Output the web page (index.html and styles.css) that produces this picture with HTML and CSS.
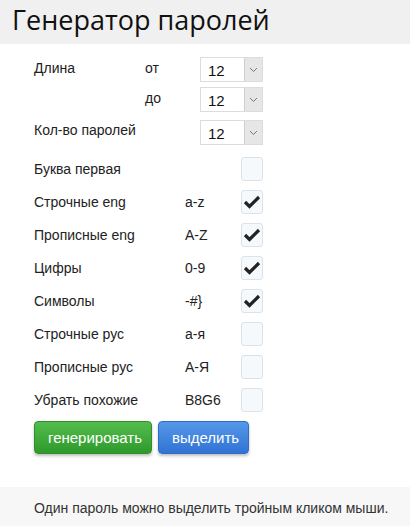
FILE: index.html
```html
<!DOCTYPE html>
<html lang="ru">

<head>
    <meta charset="UTF-8">
    <meta name="viewport" content="width=device-width, initial-scale=1.0">
    <title>Генератор паролей</title>
    <link rel="stylesheet" href="styles.css">
</head>

<body>
    <div class="header">
        <h1>Генератор паролей</h1>
    </div>

    <div class="form">
        <!-- Length -->
        <div class="row row-select">
            <div class="label short">Длина</div>
            <div class="sub">от</div>
            <div class="select"><span class="val">12</span><span class="arrow"><svg width="9" height="6" viewBox="0 0 9 6"><path d="M1 1l3.5 3.5L8 1" fill="none" stroke="#777" stroke-width="1"/></svg></span></div>
        </div>
        <div class="row row-select">
            <div class="label short"></div>
            <div class="sub">до</div>
            <div class="select"><span class="val">12</span><span class="arrow"><svg width="9" height="6" viewBox="0 0 9 6"><path d="M1 1l3.5 3.5L8 1" fill="none" stroke="#777" stroke-width="1"/></svg></span></div>
        </div>
        <div class="row row-select count">
            <div class="label long">Кол-во паролей</div>
            <div class="select"><span class="val">12</span><span class="arrow"><svg width="9" height="6" viewBox="0 0 9 6"><path d="M1 1l3.5 3.5L8 1" fill="none" stroke="#777" stroke-width="1"/></svg></span></div>
        </div>

        <!-- Options -->
        <div class="row row-check">
            <div class="label">Буква первая</div>
            <div class="hint"></div>
            <div class="check"></div>
        </div>
        <div class="row row-check">
            <div class="label">Строчные eng</div>
            <div class="hint">a-z</div>
            <div class="check on"><svg width="18" height="14" viewBox="0 0 18 14"><path d="M2 7l4.5 4.5L16 2" fill="none" stroke="#222" stroke-width="3.2"/></svg></div>
        </div>
        <div class="row row-check">
            <div class="label">Прописные eng</div>
            <div class="hint">A-Z</div>
            <div class="check on"><svg width="18" height="14" viewBox="0 0 18 14"><path d="M2 7l4.5 4.5L16 2" fill="none" stroke="#222" stroke-width="3.2"/></svg></div>
        </div>
        <div class="row row-check">
            <div class="label">Цифры</div>
            <div class="hint">0-9</div>
            <div class="check on"><svg width="18" height="14" viewBox="0 0 18 14"><path d="M2 7l4.5 4.5L16 2" fill="none" stroke="#222" stroke-width="3.2"/></svg></div>
        </div>
        <div class="row row-check">
            <div class="label">Символы</div>
            <div class="hint">-#}</div>
            <div class="check on"><svg width="18" height="14" viewBox="0 0 18 14"><path d="M2 7l4.5 4.5L16 2" fill="none" stroke="#222" stroke-width="3.2"/></svg></div>
        </div>
        <div class="row row-check">
            <div class="label">Строчные рус</div>
            <div class="hint">а-я</div>
            <div class="check"></div>
        </div>
        <div class="row row-check">
            <div class="label">Прописные рус</div>
            <div class="hint">А-Я</div>
            <div class="check"></div>
        </div>
        <div class="row row-check">
            <div class="label">Убрать похожие</div>
            <div class="hint">B8G6</div>
            <div class="check"></div>
        </div>

        <div class="buttons">
            <button class="btn btn-green">генерировать</button>
            <button class="btn btn-blue">выделить</button>
        </div>
    </div>

    <div class="footer">
        Один пароль можно выделить тройным кликом мыши.
    </div>
</body>

</html>
```

FILE: styles.css
```css
body {
    font-family: "Liberation Sans", Arial, sans-serif;
    font-size: 14px;
    color: #222;
    margin: 0;
    padding: 0;
    background-color: #ffffff;
}

.header {
    background-color: #f0f0f0;
    height: 44px;
    padding-left: 12px;
}

h1 {
    margin: 0;
    font-family: "Open Sans", "DejaVu Sans", sans-serif;
    font-weight: normal;
    font-size: 27px;
    line-height: 40px;
    color: #111;
}

.form {
    padding: 13px 0 0 34px;
    height: 443px;
    box-sizing: border-box;
}

.row {
    display: flex;
    align-items: center;
}

.row-select {
    height: 25px;
    margin-bottom: 5px;
}

.row-select.count {
    margin-top: 8px;
    margin-bottom: 12px;
}

.row-check {
    height: 24px;
    margin-bottom: 9px;
}

.label {
    width: 151px;
    flex-shrink: 0;
}

.label.short {
    width: 111px;
}

.label.long {
    width: 166px;
}

.sub {
    width: 55px;
}

.row-select .label,
.row-select .sub {
    align-self: flex-start;
    padding-top: 3px;
}

.row-select.count .label {
    padding-top: 2px;
}

.hint {
    width: 56px;
}

.select {
    display: flex;
    width: 63px;
    height: 25px;
    box-sizing: border-box;
    border: 1px solid #dcdcdc;
    background: #fff;
}

.select .val {
    flex: 1;
    padding-left: 7px;
    font-size: 15px;
    line-height: 25px;
    color: #111;
}

.select .arrow {
    width: 17px;
    background: #e6e6e6;
    border-left: 1px solid #cfcfcf;
    display: flex;
    align-items: center;
    justify-content: center;
}

.check {
    width: 22px;
    height: 24px;
    box-sizing: border-box;
    border: 1px solid #dbe2ea;
    border-radius: 3px;
    background: #f6f9fc;
    display: flex;
    align-items: center;
    justify-content: center;
}

.buttons {
    display: flex;
    gap: 6px;
    margin-top: 3px;
}

.btn {
    height: 33px;
    border: none;
    border-radius: 4px;
    color: #fff;
    font-family: "Liberation Sans", Arial, sans-serif;
    font-size: 15px;
    padding: 0 13px;
    box-shadow: 0 2px 3px rgba(0, 0, 0, 0.25);
}

.btn-green {
    width: 118px;
    background: linear-gradient(#52bd4c, #2f9a2c);
    border: 1px solid #2e8f2b;
}

.btn-blue {
    width: 91px;
    background: linear-gradient(#5598e8, #3173d4);
    border: 1px solid #2f6cc4;
}

.footer {
    background-color: #f7f7f7;
    height: 39px;
    padding: 13px 0 0 34px;
    color: #333;
}
```
